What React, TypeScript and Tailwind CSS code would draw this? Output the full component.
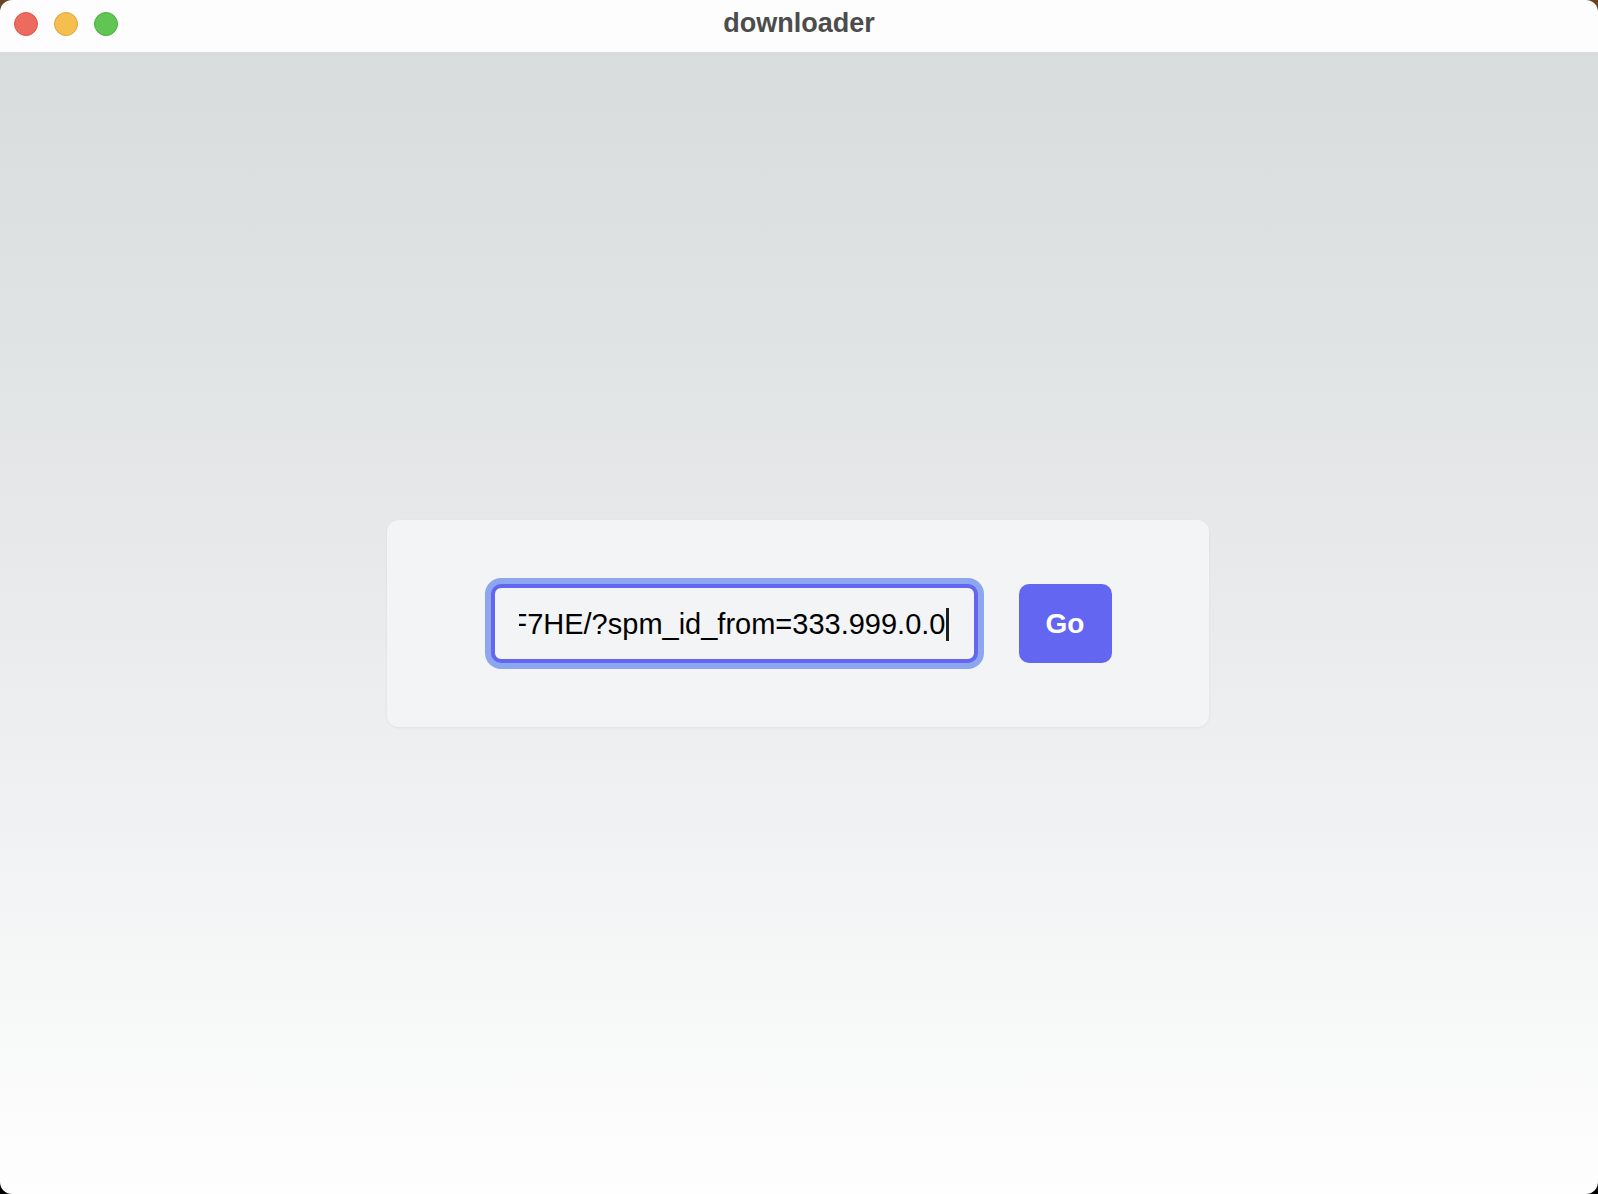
import React from "react";

export default function App() {
  const url = "https://www.bilibili.com/video/BV1Gj411F7HE/?spm_id_from=333.999.0.0";
  return (
    <div className="w-[1598px] h-[1194px] bg-gradient-to-b from-[#6b4423] via-[#1a1a1a] to-black overflow-hidden">
      <div
        className="w-full h-full rounded-[12px] overflow-hidden flex flex-col"
        style={{ fontFamily: '"Liberation Sans", Arial, sans-serif' }}
      >
        {/* Title bar */}
        <div className="relative h-[52px] shrink-0 bg-[#fdfdfd] flex items-center justify-center">
          <div className="absolute left-[14px] top-[12px] flex gap-[16px]">
            <span className="block w-[24px] h-[24px] rounded-full bg-[#ed6a5e] border border-[#d9574b]" />
            <span className="block w-[24px] h-[24px] rounded-full bg-[#f5bf4f] border border-[#dca53a]" />
            <span className="block w-[24px] h-[24px] rounded-full bg-[#61c554] border border-[#4fad43]" />
          </div>
          <span className="text-[27px] font-bold text-[#4c4c4c] leading-none -mt-[6px]">downloader</span>
        </div>

        {/* Content */}
        <div className="flex-1 bg-gradient-to-b from-[#d8dcdd] via-[#e9ebec] to-[#fefefe] flex items-center justify-center pr-[3px]">
          <div className="w-[822px] h-[207px] bg-[#f3f4f6] rounded-[12px] shadow-[0_1px_3px_rgba(0,0,0,0.06)] flex items-center pl-[104px] pr-[97px] gap-[41px]">
            <div className="w-[487px] h-[79px] rounded-[10px] border-[4px] border-[#6366f1] bg-[#f3f4f6] shadow-[0_0_0_6px_#8da6f0] flex items-center pl-[24px] pr-[25px]">
              <div className="flex-1 min-w-0 overflow-hidden flex items-center justify-end pt-[2px]">
                <div className="flex items-center whitespace-nowrap text-[29px] text-black leading-none shrink-0">
                  <span>{url}</span>
                  <span className="inline-block w-[3px] h-[33px] bg-[#1f1f1f]" />
                </div>
              </div>
            </div>
            <button className="w-[93px] h-[79px] rounded-[10px] bg-[#6366f1] text-white text-[28px] font-bold flex items-center justify-center pt-[2px]">
              Go
            </button>
          </div>
        </div>
      </div>
    </div>
  );
}
